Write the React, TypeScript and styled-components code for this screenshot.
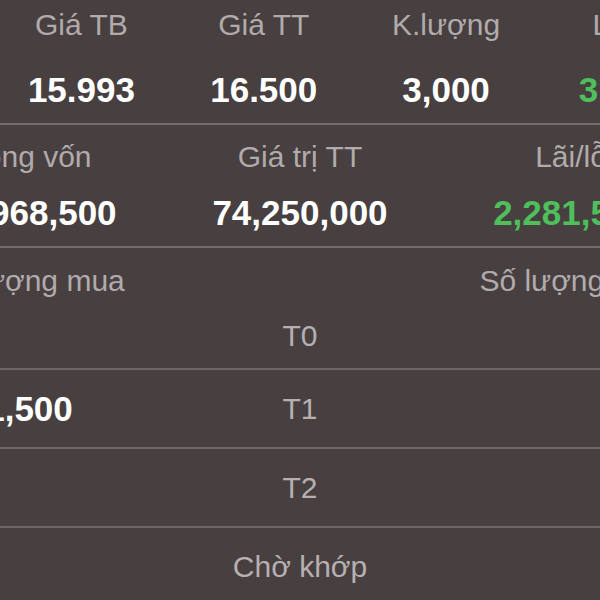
import React from 'react'
import styled, { createGlobalStyle } from 'styled-components'

const GlobalStyle = createGlobalStyle`
  html, body {
    margin: 0;
    padding: 0;
    background: #473f40;
  }
  body {
    font-family: "Liberation Sans", Arial, sans-serif;
  }
`

const Screen = styled.div`
  width: 600px;
  height: 600px;
  overflow: hidden;
  background: #473f40;
`

const Section = styled.div<{ $top: number }>`
  padding-top: ${p => p.$top}px;
  padding-bottom: 13px;
  border-bottom: 2px solid #736b6c;
`

// wide grids, cropped by the screen on both sides
const SummaryGrid = styled.div`
  display: grid;
  grid-template-columns: repeat(5, 182.3px);
  margin-left: -192px;
`

const TripleGrid = styled.div`
  display: grid;
  grid-template-columns: 258px 284px 258px;
  margin-left: -100px;
`

const Cell = styled.div<{ $gap: number }>`
  display: flex;
  flex-direction: column;
  align-items: center;
  gap: ${p => p.$gap}px;
  white-space: nowrap;
`

const Label = styled.span`
  font-size: 30px;
  line-height: 36px;
  color: #b1abac;
`

const Value = styled.span<{ $up?: boolean }>`
  font-size: 35px;
  line-height: 40px;
  font-weight: 700;
  color: ${p => (p.$up ? '#4fbf5c' : '#ffffff')};
`

const TableHead = styled(TripleGrid)`
  padding: 15px 0 5px;
`

const TableRow = styled(TripleGrid)<{ $first?: boolean }>`
  height: ${p => (p.$first ? 64 : 77)}px;
  align-items: center;
  border-bottom: 2px solid #6e6667;
`

const Col = styled.div`
  display: flex;
  justify-content: center;
  white-space: nowrap;
`

const Status = styled.span`
  font-size: 30px;
  line-height: 36px;
  color: #b6b0b1;
`

const summary = [
  { label: 'Mã', value: 'HPG' },
  { label: 'Giá TB', value: '15.993' },
  { label: 'Giá TT', value: '16.500' },
  { label: 'K.lượng', value: '3,000' },
  { label: 'Lãi/lỗ', value: '3.17%', up: true },
]

const totals = [
  { label: 'Tổng vốn', value: '71,968,500' },
  { label: 'Giá trị TT', value: '74,250,000' },
  { label: 'Lãi/lỗ', value: '2,281,500', up: true },
]

const rows = [
  { status: 'T0', buy: '', sell: '' },
  { status: 'T1', buy: '1,500', sell: '' },
  { status: 'T2', buy: '', sell: '' },
  { status: 'Chờ khớp', buy: '', sell: '' },
]

export default function App() {
  return (
    <Screen>
      <GlobalStyle />
      <Section $top={7}>
        <SummaryGrid>
          {summary.map((s, idx) => (
            <Cell key={idx} $gap={27}>
              <Label>{s.label}</Label>
              <Value $up={s.up}>{s.value}</Value>
            </Cell>
          ))}
        </SummaryGrid>
      </Section>
      <Section $top={14}>
        <TripleGrid>
          {totals.map((s, idx) => (
            <Cell key={idx} $gap={18}>
              <Label>{s.label}</Label>
              <Value $up={s.up}>{s.value}</Value>
            </Cell>
          ))}
        </TripleGrid>
      </Section>
      <TableHead>
        <Col>
          <Label>Số lượng mua</Label>
        </Col>
        <Col />
        <Col>
          <Label>Số lượng bán</Label>
        </Col>
      </TableHead>
      {rows.map((r, idx) => (
        <TableRow key={idx} $first={idx === 0}>
          <Col>{r.buy && <Value>{r.buy}</Value>}</Col>
          <Col>
            <Status>{r.status}</Status>
          </Col>
          <Col>{r.sell && <Value>{r.sell}</Value>}</Col>
        </TableRow>
      ))}
    </Screen>
  )
}
